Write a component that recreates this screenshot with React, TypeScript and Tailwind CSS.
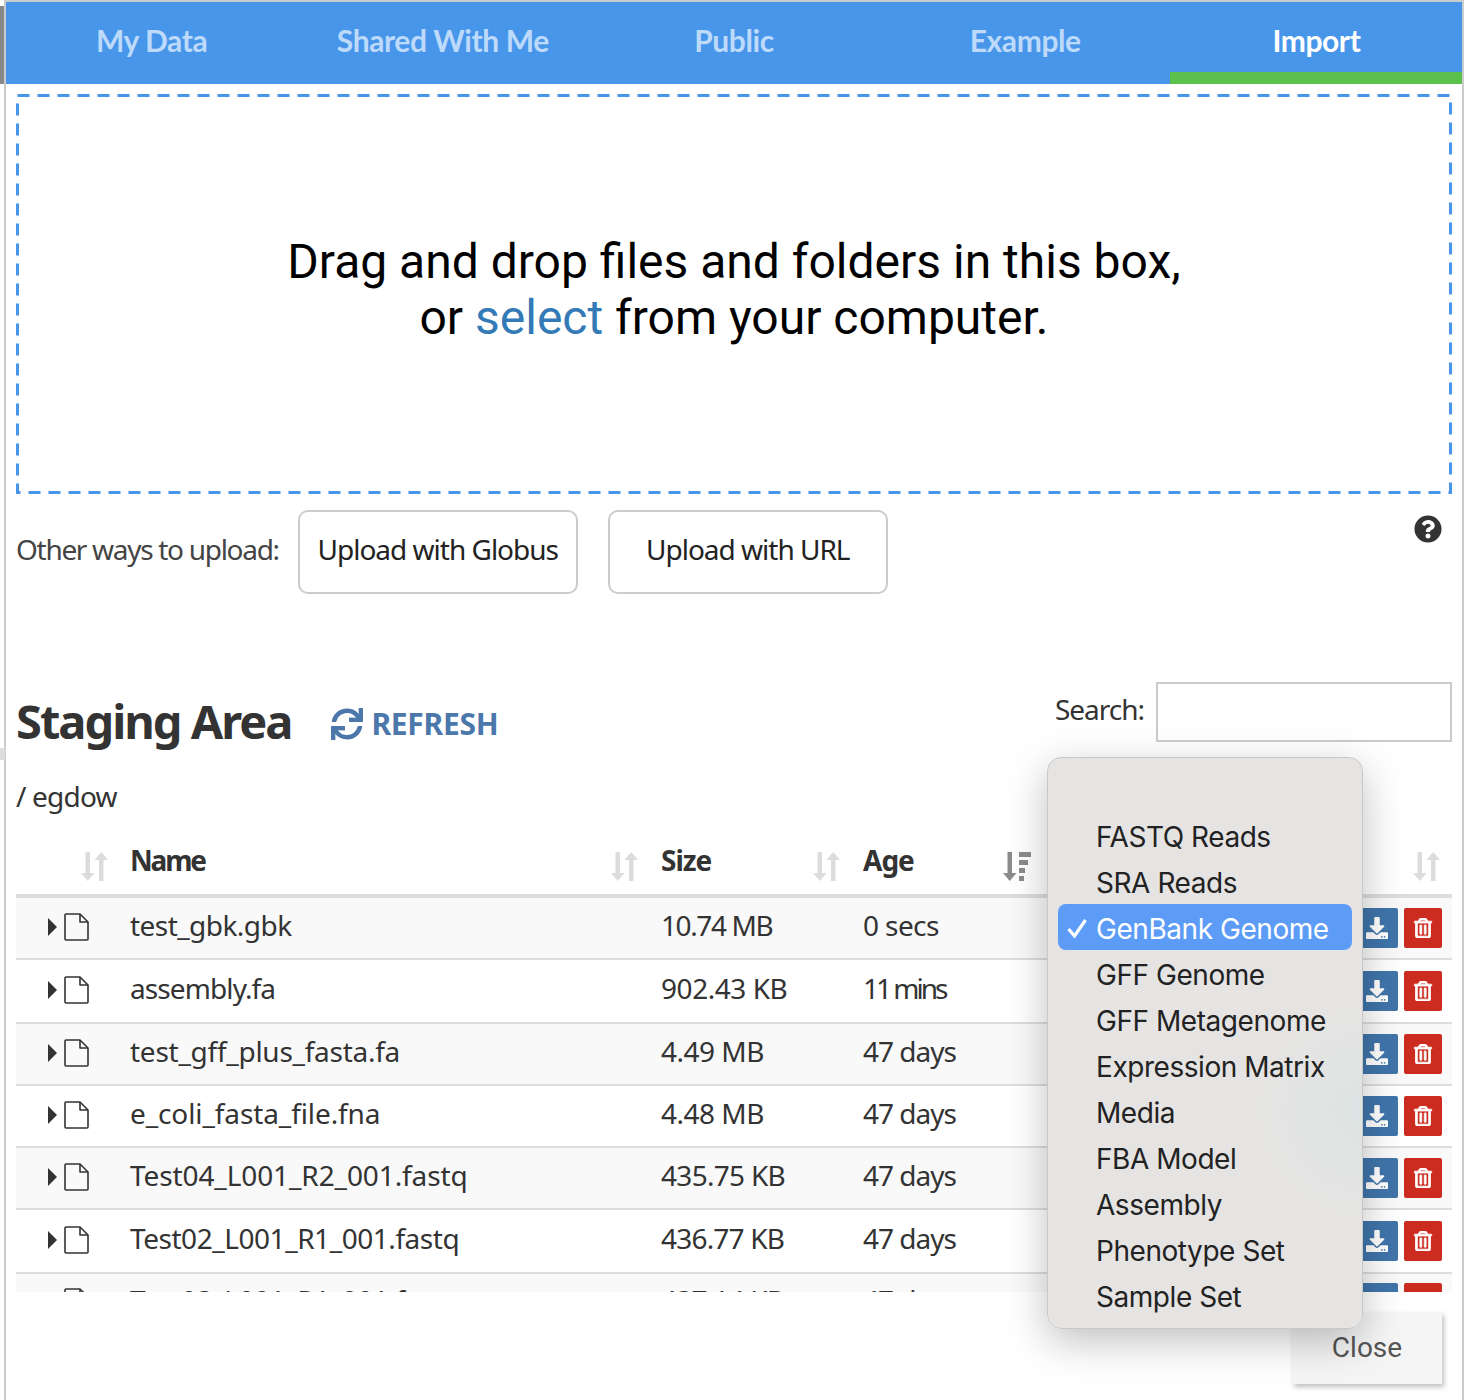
import React from 'react';
import { FaDownload, FaQuestionCircle, FaRegTrashAlt, FaSync } from 'react-icons/fa';

const tabs = ['My Data', 'Shared With Me', 'Public', 'Example', 'Import'];

const files = [
  { name: 'test_gbk.gbk', nameTrack: 'tracking-[-0.55px]', size: '10.74 MB', sizeTrack: 'tracking-[-1.4px]', age: '0 secs', ageTrack: 'tracking-[-0.6px]', h: 'h-[62px]' },
  { name: 'assembly.fa', nameTrack: 'tracking-[-0.9px]', size: '902.43 KB', sizeTrack: 'tracking-[-0.45px]', age: '11 mins', ageTrack: 'tracking-[-3px]', h: 'h-[64px]' },
  { name: 'test_gff_plus_fasta.fa', nameTrack: 'tracking-[-0.26px]', size: '4.49 MB', sizeTrack: 'tracking-[-0.5px]', age: '47 days', ageTrack: 'tracking-[-1px]', h: 'h-[62px]' },
  { name: 'e_coli_fasta_file.fna', nameTrack: 'tracking-[-0.1px]', size: '4.48 MB', sizeTrack: 'tracking-[-0.5px]', age: '47 days', ageTrack: 'tracking-[-1px]', h: 'h-[62px]' },
  { name: 'Test04_L001_R2_001.fastq', nameTrack: 'tracking-[-0.1px]', size: '435.75 KB', sizeTrack: 'tracking-[-0.7px]', age: '47 days', ageTrack: 'tracking-[-1px]', h: 'h-[62px]' },
  { name: 'Test02_L001_R1_001.fastq', nameTrack: 'tracking-[-0.45px]', size: '436.77 KB', sizeTrack: 'tracking-[-0.8px]', age: '47 days', ageTrack: 'tracking-[-1px]', h: 'h-[64px]' },
  { name: 'Test03_L001_R1_001.fastq', nameTrack: 'tracking-[-0.45px]', size: '437.14 KB', sizeTrack: 'tracking-[-0.8px]', age: '47 days', ageTrack: 'tracking-[-1px]', h: 'h-[60px]' },
];

const importTypes = [
  'FASTQ Reads',
  'SRA Reads',
  'GenBank Genome',
  'GFF Genome',
  'GFF Metagenome',
  'Expression Matrix',
  'Media',
  'FBA Model',
  'Assembly',
  'Phenotype Set',
  'Sample Set',
];

const SortIcon = () => (
  <svg width="27" height="29" viewBox="0 0 27 29" className="text-[#dcdcdc] shrink-0" fill="currentColor">
    <path d="M4.500 0h4.500v21h4.500L6.750 29 0 21h4.500z" />
    <path d="M18 29h4.500V8H27L20.250 0 13.500 8H18z" />
  </svg>
);

const SortedIcon = () => (
  <svg width="28" height="29" viewBox="0 0 28 29" className="text-[#8c8c8c] shrink-0" fill="currentColor">
    <path d="M4.500 0h4.500v21h4.500L6.750 29 0 21h4.500z" />
    <rect x="16" y="0" width="12" height="5" />
    <rect x="16" y="8" width="9" height="5" />
    <rect x="16" y="16" width="6" height="5" />
    <rect x="16" y="24" width="5" height="5" />
  </svg>
);

const FileIcon = () => (
  <svg width="25" height="28" viewBox="0 0 25 28" fill="none" stroke="#333" strokeWidth="1.6" strokeLinejoin="round">
    <path d="M2 1h14l8 8v17a1 1 0 0 1-1 1H2a1 1 0 0 1-1-1V2a1 1 0 0 1 1-1z" />
    <path d="M16 1v8h8" />
  </svg>
);

const App = () => {
  return (
    <div className="relative w-[1464px] h-[1400px] overflow-hidden bg-white font-['Noto_Sans',sans-serif] text-[#333]">
      {/* modal frame */}
      <div className="absolute left-0 top-[6px] w-[4px] h-[78px] bg-[#888]" />
      <div className="absolute left-0 top-[748px] w-[5px] h-[12px] bg-[#ddd]" />
      <div className="ml-[4px] h-[1400px] border-x-2 border-t-2 border-[#ccc] flex flex-col">
        <div className="flex h-[82px] bg-[#4896ea]">
          {tabs.map((t) => (
            <div
              key={t}
              className={`flex-1 flex items-center justify-center pb-[6px] text-[30px] font-bold tracking-[-0.4px] font-['Lato',sans-serif] ${
                t === 'Import' ? 'text-white relative' : 'text-[#bddafa]'
              }`}
            >
              {t}
              {t === 'Import' && <div className="absolute -left-[1px] right-0 bottom-0 h-[12px] bg-[#5cc14c]" />}
            </div>
          ))}
        </div>

        <div className="flex-1 px-[10px] pt-[10px]">
          {/* drop zone */}
          <div className="relative h-[400px] flex flex-col items-center justify-center pb-[8px] font-['Roboto',sans-serif] text-[48px] leading-[56px] text-black">
            <svg className="absolute inset-0 w-full h-full" fill="none">
              <rect x="1.500" y="1.500" width="1433" height="397" stroke="#4896ea" strokeWidth="3" strokeDasharray="12 8" />
            </svg>
            <div>Drag and drop files and folders in this box,</div>
            <div>
              or <span className="text-[#337ab7]">select</span> from your computer.
            </div>
          </div>

          <div className="flex mt-[16px] h-[84px]">
            <span className="mt-[21px] mr-[19px] text-[28px] leading-[36px] tracking-[-1.3px] text-[#444]">Other ways to upload:</span>
            <button className="w-[280px] h-[84px] pb-[6px] border-2 border-[#ccc] rounded-[10px] text-[28px] tracking-[-1px] text-[#222]">Upload with Globus</button>
            <button className="ml-[30px] w-[280px] h-[84px] pb-[6px] border-2 border-[#ccc] rounded-[10px] text-[28px] tracking-[-1px] text-[#222]">Upload with URL</button>
            <FaQuestionCircle className="ml-auto mr-[10px] mt-[5px] text-[#333]" size={28} />
          </div>

          {/* staging area */}
          <div className="flex items-center mt-[88px] h-[60px]">
            <h2 className="mt-[18px] text-[47px] font-bold tracking-[-2px] text-[#333]">Staging Area</h2>
            <FaSync className="ml-[40px] mt-[24px] text-[#4b77ab]" size={32} />
            <span className="ml-[8px] mt-[22px] text-[30px] font-bold tracking-[-0.3px] text-[#4b77ab]">REFRESH</span>
            <span className="ml-auto mr-[12px] text-[28px] tracking-[-1px] -mt-[6px]">Search:</span>
            <input className="w-[296px] h-[60px] border-2 border-[#ccc]" />
          </div>

          <div className="mt-[32px] text-[28px] leading-[44px] tracking-[-0.8px]">/ egdow</div>

          <div className="mt-[12px] h-[462px] overflow-hidden">
            {/* header */}
            <div className="grid grid-cols-[114px_531px_202px_190px_1fr] h-[68px] border-b-[4px] border-[#ddd] text-[28px] font-bold tracking-[-1px]">
              <div className="flex justify-end items-center pr-[22px] pt-[8px]"><SortIcon /></div>
              <div className="flex justify-between items-center pr-[23px]"><span className="-mt-[4px] tracking-[-2.2px]">Name</span><span className="pt-[8px]"><SortIcon /></span></div>
              <div className="flex justify-between items-center pr-[23px]"><span className="-mt-[4px]">Size</span><span className="pt-[8px]"><SortIcon /></span></div>
              <div className="flex justify-between items-center pr-[22px]"><span className="-mt-[4px]">Age</span><span className="pt-[8px]"><SortedIcon /></span></div>
              <div className="flex justify-end items-center pr-[12px] pt-[8px]"><SortIcon /></div>
            </div>
            {/* rows */}
            {files.map((f, i) => (
              <div
                key={f.name}
                className={`grid grid-cols-[114px_531px_202px_190px_1fr] items-center ${f.h} border-b-2 border-[#ddd] text-[28px] ${i % 2 === 0 ? 'bg-[#f9f9f9]' : 'bg-white'}`}
              >
                <div className="flex items-center pl-[32px] gap-[7px] -mt-[3px]">
                  <svg width="9" height="18" viewBox="0 0 9 18" fill="#333"><path d="M0 0l9 9-9 9z" /></svg>
                  <FileIcon />
                </div>
                <div className={`-mt-[7px] ${f.nameTrack}`}>{f.name}</div>
                <div className={`-mt-[7px] ${f.sizeTrack}`}>{f.size}</div>
                <div className={`-mt-[7px] ${f.ageTrack}`}>{f.age}</div>
                <div className="flex justify-end gap-[6px] pr-[10px]">
                  <button className="w-[42px] h-[40px] rounded-[2px] bg-[#4075ab] flex items-center justify-center text-white"><FaDownload size={22} /></button>
                  <button className="w-[38px] h-[40px] rounded-[2px] bg-[#cc2c20] flex items-center justify-center text-white"><FaRegTrashAlt size={20} stroke="currentColor" strokeWidth={20} /></button>
                </div>
              </div>
            ))}
          </div>
        </div>
      </div>

      {/* close button */}
      <button className="absolute left-[1292px] top-[1312px] w-[150px] h-[72px] bg-[#f5f5f5] shadow-[2px_3px_5px_rgba(0,0,0,0.25)] font-['Roboto',sans-serif] text-[28px] text-[#555]">Close</button>

      {/* native select menu */}
      <div className="absolute left-[1047px] top-[757px] w-[316px] h-[572px] rounded-[14px] border border-[#c9c8c7] bg-[radial-gradient(circle_at_100%_62%,#dde4e3_0,#e5e4e3_22%)] pt-[54px] px-[10px] shadow-[0_12px_40px_rgba(0,0,0,0.25)] font-['Inter',sans-serif] text-[28px] text-[#222]">
        {importTypes.map((t) => (
          <div
            key={t}
            className={`flex items-center h-[46px] pt-[3px] rounded-[8px] ${t === 'GenBank Genome' ? 'bg-[#5c9bf6] text-white' : ''}`}
          >
            <span className="w-[38px] pl-[9px] shrink-0">
              {t === 'GenBank Genome' && (
                <svg width="20" height="19" viewBox="0 0 20 19" fill="none" stroke="white" strokeWidth="3.2"><path d="M1.500 10l6 7L18.500 1" /></svg>
              )}
            </span>
            <span className="tracking-[-0.45px]">{t}</span>
          </div>
        ))}
      </div>
    </div>
  );
};

export default App;
